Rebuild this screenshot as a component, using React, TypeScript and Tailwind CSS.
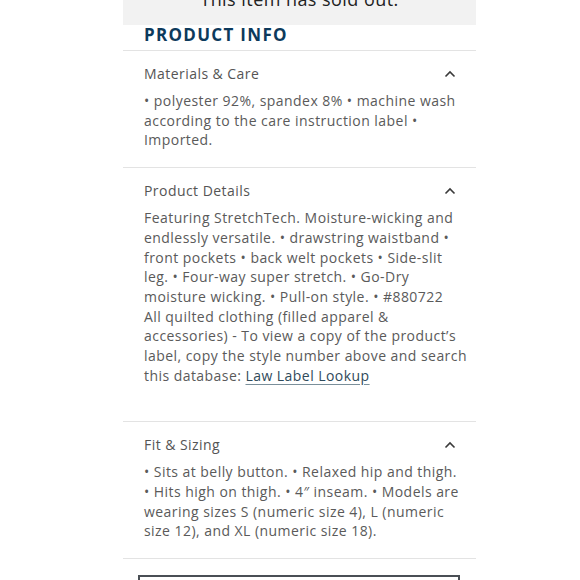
import { ReactNode } from 'react'

function Chevron() {
  return (
    <svg width="12" height="8" viewBox="0 0 12 8" fill="none" className="shrink-0">
      <path d="M1.5 6.5L6 2L10.5 6.5" stroke="#3a3a3a" strokeWidth="1.6" />
    </svg>
  )
}

function Section({ title, lines, extra = '' }: { title: string; lines: ReactNode[]; extra?: string }) {
  return (
    <div className={`border-b border-[#e3e3e3] pl-[21px] pt-[13px] pb-[17px] ${extra}`}>
      <div className="flex items-center justify-between pr-[20px] text-[14px] leading-[20px] text-[#555]">
        <span>{title}</span>
        <Chevron />
      </div>
      <div className="mt-[7px] text-[14px] leading-[19.7px] text-[#5a5a5a]">
        {lines.map((l, i) => (
          <div key={i} className="whitespace-nowrap">
            {l}
          </div>
        ))}
      </div>
    </div>
  )
}

export default function App() {
  return (
    <div
      className="h-[580px] overflow-hidden bg-white tracking-[0.45px]"
      style={{ fontFamily: '"Open Sans", Arial, sans-serif' }}
    >
      <div className="ml-[123px] w-[353px]">
        <div className="flex h-[25px] items-start justify-center overflow-hidden bg-[#f2f2f2]">
          <span className="-mt-[13px] text-[18px] leading-[24px] text-[#222]">This item has sold out.</span>
        </div>
        <h2 className="border-b border-[#e3e3e3] px-[21px] pt-[1px] pb-[7px] text-[17px] font-bold leading-[17px] tracking-[1.3px] text-[#0d3a5c]">
          PRODUCT INFO
        </h2>
        <Section
          title="Materials & Care"
          lines={[
            '• polyester 92%, spandex 8% • machine wash',
            'according to the care instruction label •',
            'Imported.',
          ]}
        />
        <Section
          title="Product Details"
          extra="min-h-[254px]"
          lines={[
            'Featuring StretchTech. Moisture-wicking and',
            'endlessly versatile. • drawstring waistband •',
            'front pockets • back welt pockets • Side-slit',
            'leg. • Four-way super stretch. • Go-Dry',
            'moisture wicking. • Pull-on style. • #880722',
            'All quilted clothing (filled apparel &',
            'accessories) - To view a copy of the product’s',
            'label, copy the style number above and search',
            <>
              this database:{' '}
              <a href="#" className="text-[#2f4a5a] underline decoration-[#7a8f9a] underline-offset-[3px]">
                Law Label Lookup
              </a>
            </>,
          ]}
        />
        <Section
          title="Fit & Sizing"
          lines={[
            '• Sits at belly button. • Relaxed hip and thigh.',
            '• Hits high on thigh. • 4″ inseam. • Models are',
            'wearing sizes S (numeric size 4), L (numeric',
            'size 12), and XL (numeric size 18).',
          ]}
        />
        <div className="pl-[15px] pr-[16px] pt-[16px]">
          <button className="h-[44px] w-full border-2 border-[#4a4f55] bg-white" />
        </div>
      </div>
    </div>
  )
}
